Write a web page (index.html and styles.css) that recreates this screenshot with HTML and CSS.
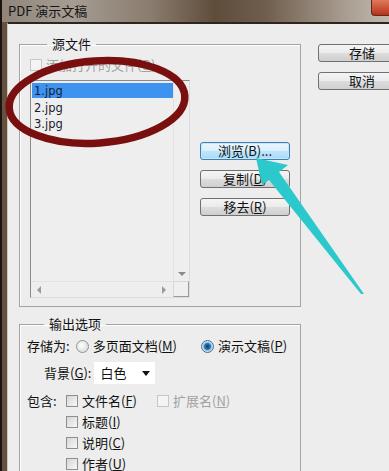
FILE: index.html
```html
<!DOCTYPE html>
<html lang="zh-CN">
<head>
    <meta charset="UTF-8">
    <meta name="viewport" content="width=device-width, initial-scale=1.0">
    <title>PDF 演示文稿</title>
    <link rel="stylesheet" href="styles.css">
</head>
<body>
<div class="window">
    <div class="titlebar">
        <span class="title">PDF 演示文稿</span>
        <span class="close"></span>
    </div>
    <div class="content">
        <div class="main">
            <fieldset class="group source">
                <legend>源文件</legend>
                <label class="check disabled"><span class="box"></span>添加打开的文件(<u>O</u>)</label>
                <div class="sourceRow">
                    <div class="listbox">
                        <div class="listItems">
                            <div class="item selected">1.jpg</div>
                            <div class="item">2.jpg</div>
                            <div class="item">3.jpg</div>
                        </div>
                        <div class="vscroll"><span class="arrowDown"></span></div>
                        <div class="hscroll"><span class="arrowLeft"></span><span class="arrowRight"></span></div>
                        <div class="corner"></div>
                    </div>
                    <div class="listButtons">
                        <a href="#" class="btn active">浏览(B)...</a>
                        <a href="#" class="btn">复制(<u>D</u>)</a>
                        <a href="#" class="btn">移去(<u>R</u>)</a>
                    </div>
                </div>
            </fieldset>

            <fieldset class="group output">
                <legend>输出选项</legend>
                <div class="row saveAs">
                    <span class="rowLabel">存储为:</span>
                    <label class="radio"><span class="dot"></span>多页面文档(<u>M</u>)</label>
                    <label class="radio checked"><span class="dot"></span>演示文稿(<u>P</u>)</label>
                </div>
                <div class="row background">
                    <span class="rowLabel">背景(<u>G</u>):</span>
                    <div class="select">白色<span class="caret"></span></div>
                </div>
                <div class="row include">
                    <span class="rowLabel">包含:</span>
                    <div class="includeList">
                        <div class="includeLine">
                            <label class="check"><span class="box"></span>文件名(<u>F</u>)</label>
                            <label class="check disabled"><span class="box"></span>扩展名(<u>N</u>)</label>
                        </div>
                        <label class="check"><span class="box"></span>标题(<u>I</u>)</label>
                        <label class="check"><span class="box"></span>说明(<u>C</u>)</label>
                        <label class="check"><span class="box"></span>作者(<u>U</u>)</label>
                    </div>
                </div>
            </fieldset>
        </div>
        <div class="side">
            <a href="#" class="btn wide">存储</a>
            <a href="#" class="btn wide">取消</a>
        </div>
    </div>

    <!-- hand drawn marks on top of the screenshot -->
    <svg class="marks" width="389" height="471" viewBox="0 0 389 471">
        <ellipse cx="97" cy="102" rx="88" ry="41" transform="rotate(-4 97 102)" fill="none" stroke="#7a0f0f" stroke-width="7.5"/>
        <polygon points="256,158 288,165 279,172 364,294 361,294 269,180 262,185" fill="#2bc8cc"/>
    </svg>
</div>
</body>
</html>
```
FILE: styles.css
```css
body{
    margin: 0px;
    width: 389px;
    height: 471px;
    overflow: hidden;
    font-family: "Noto Sans CJK SC", "DejaVu Sans", sans-serif;
    font-size: 13px;
    line-height: 16px;
    color: #111;
}
a{
    text-decoration: none;
    color: #111;
}
u{
    text-decoration: underline;
    text-underline-offset: 1px;
}
.window{
    position: relative;
    width: 389px;
    height: 471px;
    overflow: hidden;
    background: #65513f;
    border-left: 2px solid #1b1410;
    box-sizing: border-box;
}
.titlebar{
    height: 22px;
    display: flex;
    align-items: center;
    justify-content: space-between;
    padding-left: 6px;
    background: linear-gradient(90deg, #8f857b 0%, #a59c93 18%, #8b7d6f 38%, #5f4d3c 55%, #6f5e4d 68%, #a79b8f 88%, #c2b9ae 100%);
}
.title{
    color: #141414;
    font-size: 13px;
}
.close{
    width: 17px;
    height: 15px;
    align-self: flex-start;
    background: linear-gradient(#e0795c, #b8321a);
    border: 1px solid #5a2a1c;
    border-right: none;
    border-top: none;
    border-radius: 0 0 0 4px;
}
.content{
    height: calc(471px - 24px);
    margin-left: 5px;
    border-top: 2px solid #2e251e;
    border-left: 1px solid #cfc6bb;
    background: #ededed;
    display: flex;
}
.main{
    padding-left: 11px;
    padding-top: 12px;
    width: 282px;
    flex: none;
}
.group{
    margin: 0px;
    border: 1px solid #a3a3a3;
    box-shadow: inset 1px 1px 0 #fff;
    padding: 5px 10px 8px 10px;
    min-width: 0;
}
.group legend{
    padding: 0 5px;
    margin-left: 17px;
    line-height: 16px;
}
.check{
    display: flex;
    align-items: center;
    height: 16px;
    white-space: nowrap;
}
.box{
    width: 10px;
    height: 10px;
    border: 1px solid #8f8f8f;
    background: linear-gradient(135deg, #d6d6d6, #f7f7f7);
    margin-right: 4px;
    flex: none;
}
.check.disabled{
    color: #a2a2a2;
}
.check.disabled .box{
    border-color: #c6c6c6;
    background: #f4f4f4;
}
.sourceRow{
    display: flex;
    margin-top: 7px;
}
.listbox{
    width: 160px;
    height: 218px;
    box-sizing: border-box;
    border: 1px solid #8a8a8a;
    border-right-color: #dcdcdc;
    border-bottom-color: #dcdcdc;
    display: grid;
    grid-template-columns: 1fr 16px;
    grid-template-rows: 1fr 16px;
    background: #eeeeee;
}
.listItems{
    padding: 2px 0 0 1px;
    font-family: "DejaVu Sans", sans-serif;
    font-size: 11.5px;
}
.item{
    height: 16.5px;
    line-height: 17px;
    padding-left: 2px;
    color: #1c1c30;
}
.item.selected{
    background: #3d93ef;
    height: 15px;
    margin-bottom: 1.5px;
}
.vscroll{
    border-left: 1px solid #e2e2e2;
    display: flex;
    align-items: flex-end;
    justify-content: center;
    padding-bottom: 5px;
}
.arrowDown{
    width: 0;
    height: 0;
    border-left: 4px solid transparent;
    border-right: 4px solid transparent;
    border-top: 4px solid #8a8a8a;
}
.hscroll{
    border-top: 1px solid #e2e2e2;
    display: flex;
    align-items: center;
    justify-content: space-between;
    padding: 0 7px 0 6px;
}
.arrowLeft{
    border-top: 4px solid transparent;
    border-bottom: 4px solid transparent;
    border-right: 4px solid #9a9a9a;
}
.arrowRight{
    border-top: 4px solid transparent;
    border-bottom: 4px solid transparent;
    border-left: 4px solid #9a9a9a;
}
.corner{
    border-top: 1px solid #d8d8d8;
    border-left: 1px solid #d8d8d8;
    border-right: 1px solid #9a9a9a;
    border-bottom: 1px solid #9a9a9a;
    background: #efefef;
}
.listButtons{
    margin-left: 10px;
    padding-top: 62px;
    display: flex;
    flex-direction: column;
    gap: 10px;
}
.btn{
    display: block;
    width: 90px;
    height: 18px;
    box-sizing: border-box;
    border: 1px solid #707070;
    border-radius: 3px;
    background: linear-gradient(#f4f4f4 0%, #ebebeb 50%, #dddddd 51%, #cfcfcf 100%);
    text-align: center;
    line-height: 15px;
    font-size: 13px;
}
.btn.active{
    border-color: #3c7fb1;
    background: linear-gradient(#eaf6fd 0%, #d9f0fc 50%, #bee6fd 51%, #a7d9f5 100%);
    box-shadow: inset 0 0 0 1px #c6e7fa;
}
.side{
    margin-left: 17px;
    padding-top: 20px;
    display: flex;
    flex-direction: column;
    gap: 10px;
}
.btn.wide{
    width: 88px;
    border-radius: 3px 0 0 3px;
}
.output{
    margin-top: 9px;
    padding: 6px 8px 0 7px;
}
.row{
    display: flex;
    align-items: center;
    white-space: nowrap;
}
.saveAs{
    height: 16px;
}
.saveAs .rowLabel{
    margin-right: 6px;
}
.radio{
    display: flex;
    align-items: center;
    margin-right: 24px;
}
.dot{
    width: 11px;
    height: 11px;
    border: 1px solid #929292;
    border-radius: 50%;
    background: radial-gradient(circle at 40% 40%, #ffffff, #d3d3d3);
    margin-right: 4px;
    flex: none;
}
.radio.checked .dot{
    border-color: #4a6e8c;
    background: radial-gradient(circle, #0f3d66 0px, #2b78b4 3px, #8fc4e4 4px, #e9f2f8 6px);
}
.background{
    margin-top: 8px;
    padding-left: 17px;
}
.background .rowLabel{
    margin-right: 3px;
}
.select{
    width: 61px;
    height: 22px;
    box-sizing: border-box;
    background: #fff;
    padding-left: 6px;
    line-height: 22px;
    display: flex;
    align-items: center;
    justify-content: space-between;
    padding-right: 5px;
}
.caret{
    border-left: 4px solid transparent;
    border-right: 4px solid transparent;
    border-top: 5px solid #111;
}
.include{
    margin-top: 9px;
    align-items: flex-start;
}
.include .rowLabel{
    width: 39px;
    flex: none;
}
.includeList{
    display: flex;
    flex-direction: column;
    gap: 5px;
}
.includeLine{
    display: flex;
    gap: 20px;
}
.marks{
    position: absolute;
    top: 0px;
    left: -2px;
    pointer-events: none;
}
```
